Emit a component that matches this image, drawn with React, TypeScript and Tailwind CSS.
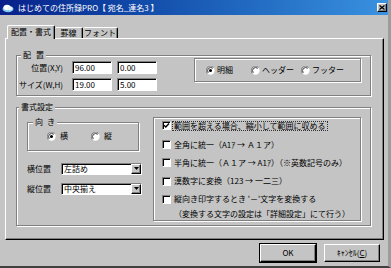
const raised =
  "border border-t-white border-l-white border-r-black border-b-black shadow-[inset_-1px_-1px_0_#808080]";
const sunken =
  "border border-t-[#808080] border-l-[#808080] border-r-white border-b-white shadow-[inset_1px_1px_0_#000]";
const etched = "border border-[#808080] shadow-[1px_1px_0_#fff,inset_1px_1px_0_#fff]";

function Radio({ on }: { on?: boolean }) {
  return (
    <svg width="9" height="9" viewBox="0 0 10 10" className="shrink-0">
      <circle cx="5" cy="5" r="4.6" fill="#fff" />
      <path d="M1.7 8.3 A4.6 4.6 0 0 1 8.3 1.7" fill="none" stroke="#808080" strokeWidth="1.2" />
      <path d="M2.6 7.4 A3.4 3.4 0 0 1 7.4 2.6" fill="none" stroke="#303030" strokeWidth="1.1" />
      {on && <circle cx="5" cy="5" r="1.7" fill="#000" />}
    </svg>
  );
}

function Check({ on }: { on?: boolean }) {
  return (
    <span className={`${sunken} w-[9px] h-[9px] bg-white flex items-center justify-center shrink-0`}>
      {on && (
        <svg width="7" height="7" viewBox="0 0 7 7">
          <path d="M1 3.2 L2.8 5 L6 1.6" stroke="#000" strokeWidth="1.4" fill="none" />
        </svg>
      )}
    </span>
  );
}

function Field({ value, className = "" }: { value: string; className?: string }) {
  return (
    <div className={`${sunken} ${className} w-[40px] h-[13px] bg-white flex items-center pl-[2px]`}>
      {value}
    </div>
  );
}

function Select({ value }: { value: string }) {
  return (
    <div className={`${sunken} ml-auto w-[81px] h-[12px] bg-white flex items-stretch`}>
      <span className="flex-1 flex items-center pl-[2px]">{value}</span>
      <span className={`${raised} w-[10px] bg-[#c4c4c4] flex items-center justify-center`}>
        <svg width="5" height="4" viewBox="0 0 5 4">
          <path d="M0 0H5L2.5 3z" fill="#000" />
        </svg>
      </span>
    </div>
  );
}

function Button({ label, primary }: { label: React.ReactNode; primary?: boolean }) {
  return (
    <div
      className={`${primary ? "outline outline-1 outline-black" : ""} ${raised} w-[56px] h-[18px] flex items-center justify-center`}
    >
      {label}
    </div>
  );
}

export default function App() {
  return (
    <div className="w-[391px] h-[268px] bg-[#c4c4c4] font-['Noto_Sans_CJK_JP',sans-serif] text-[8px] leading-none text-black flex flex-col border-r-[3px] border-r-[#9c9c9c] border-b-2 border-b-[#404040] overflow-hidden">
      {/* title bar */}
      <div className="h-[15px] shrink-0 bg-gradient-to-r from-[#0a1f8a] to-[#3a92e0] flex items-center pl-[2px] pr-[1px] text-white">
        <svg width="12" height="10" viewBox="0 0 12 10">
          <ellipse cx="6" cy="6" rx="5.5" ry="3.2" fill="#7cc6ee" />
          <ellipse cx="5" cy="4.5" rx="3.5" ry="2.8" fill="#ffffff" />
          <ellipse cx="8" cy="5.5" rx="2.5" ry="2" fill="#e8f4fb" />
        </svg>
        <span className="ml-[4px] text-[8px] whitespace-pre">はじめての住所録PRO【 宛名_連名3 】</span>
        <span className={`${raised} ml-auto w-[10px] h-[9px] bg-[#c4c4c4] flex items-center justify-center`}>
          <svg width="6" height="5" viewBox="0 0 6 5">
            <path d="M0.5 0.5 L5.5 4.5 M5.5 0.5 L0.5 4.5" stroke="#000" strokeWidth="1.3" />
          </svg>
        </span>
      </div>

      {/* tabs */}
      <div className="h-[13px] mt-[10px] pl-[7px] flex items-end shrink-0">
        <div className="relative z-10 -mb-px w-[48px] h-[14px] bg-[#c4c4c4] border-t border-l border-t-white border-l-white border-r border-r-black shadow-[inset_-1px_0_0_#808080] rounded-t-[2px] flex items-center justify-center pb-[1px]">
          配置・書式
        </div>
        <div className="w-[28px] h-[11px] border-t border-t-white border-r border-r-black shadow-[inset_-1px_0_0_#808080] rounded-t-[2px] flex items-center justify-center">
          罫線
        </div>
        <div className="w-[35px] h-[11px] border-t border-t-white border-r border-r-black shadow-[inset_-1px_0_0_#808080] rounded-t-[2px] flex items-center justify-center">
          フォント
        </div>
      </div>

      {/* tab panel */}
      <div className={`${raised} ml-[5px] w-[379px] h-[202px] pt-[10px] shrink-0`}>
        <fieldset className={`${etched} ml-[10px] w-[355px] h-[47px]`}>
          <legend className="ml-[4px] px-[2px] leading-[12px] bg-[#c4c4c4]">
            配<span className="ml-[5px]">置</span>
          </legend>
          <div className="flex">
            <div className="flex flex-col gap-[4px]">
              <div className="flex items-center h-[13px]">
                <span className="w-[46px] text-right">位置(X,Y)</span>
                <Field className="ml-[9px]" value="96.00" />
                <Field className="ml-[5px]" value="0.00" />
              </div>
              <div className="flex items-center h-[13px]">
                <span className="w-[46px] text-right">サイズ(W,H)</span>
                <Field className="ml-[9px]" value="19.00" />
                <Field className="ml-[5px]" value="5.00" />
              </div>
            </div>
            <div className={`${etched} ml-auto mr-[9px] -mt-[3px] w-[167px] h-[24px] flex items-center pl-[11px]`}>
              <Radio on />
              <span className="ml-[2px] w-[34px]">明細</span>
              <Radio />
              <span className="ml-[2px] w-[39px]">ヘッダー</span>
              <Radio />
              <span className="ml-[2px]">フッター</span>
            </div>
          </div>
        </fieldset>

        <fieldset className={`${etched} ml-[10px] mt-[5px] w-[355px] h-[125px]`}>
          <legend className="ml-[2px] px-[2px] leading-[12px] bg-[#c4c4c4]">書式設定</legend>
          <div className="flex">
            <div className="ml-[10px] w-[115px] flex flex-col">
              <fieldset className={`${etched} mt-[3px] w-[112px] h-[35px]`}>
                <legend className="ml-[5px] px-[2px] leading-[12px] bg-[#c4c4c4]">
                  向<span className="ml-[4px]">き</span>
                </legend>
                <div className="mt-[2px] h-[12px] flex items-center pl-[19px]">
                  <Radio on />
                  <span className="ml-[4px] w-[31px]">横</span>
                  <Radio />
                  <span className="ml-[4px]">縦</span>
                </div>
              </fieldset>
              <div className="mt-[12px] h-[12px] flex items-center">
                <span>横位置</span>
                <Select value="左詰め" />
              </div>
              <div className="mt-[8px] h-[12px] flex items-center">
                <span>縦位置</span>
                <Select value="中央揃え" />
              </div>
            </div>

            <div className={`${etched} ml-[11px] mt-[4px] w-[208px] h-[104px] pt-[2px] pl-[8px] flex flex-col`}>
              <div className="h-[12px] flex items-center">
                <Check on />
                <span className="ml-[2px] px-[1px] outline outline-1 outline-dotted outline-[#333]">
                  範囲を超える場合、縮小して範囲に収める
                </span>
              </div>
              <div className="mt-[7px] h-[12px] flex items-center">
                <Check />
                <span className="ml-[3px]">全角に統一（A1ｱ → Ａ１ア）</span>
              </div>
              <div className="mt-[6px] h-[12px] flex items-center">
                <Check />
                <span className="ml-[3px]">半角に統一（Ａ１ア → A1ｱ）（※英数記号のみ）</span>
              </div>
              <div className="mt-[7px] h-[12px] flex items-center">
                <Check />
                <span className="ml-[3px]">漢数字に変換（123 → 一二三）</span>
              </div>
              <div className="mt-[6px] h-[12px] flex items-center">
                <Check />
                <span className="ml-[3px]">縦向き印字するとき '－'文字を変換する</span>
              </div>
              <div className="mt-[3px] h-[12px] flex items-center pl-[12px]">
                （変換する文字の設定は「詳細設定」にて行う）
              </div>
            </div>
          </div>
        </fieldset>
      </div>

      {/* buttons */}
      <div className="mt-[4px] pr-[8px] flex justify-end gap-[8px]">
        <Button label="OK" primary />
        <Button
          label={
            <span>
              ｷｬﾝｾﾙ(<span className="underline">C</span>)
            </span>
          }
        />
      </div>
    </div>
  );
}
